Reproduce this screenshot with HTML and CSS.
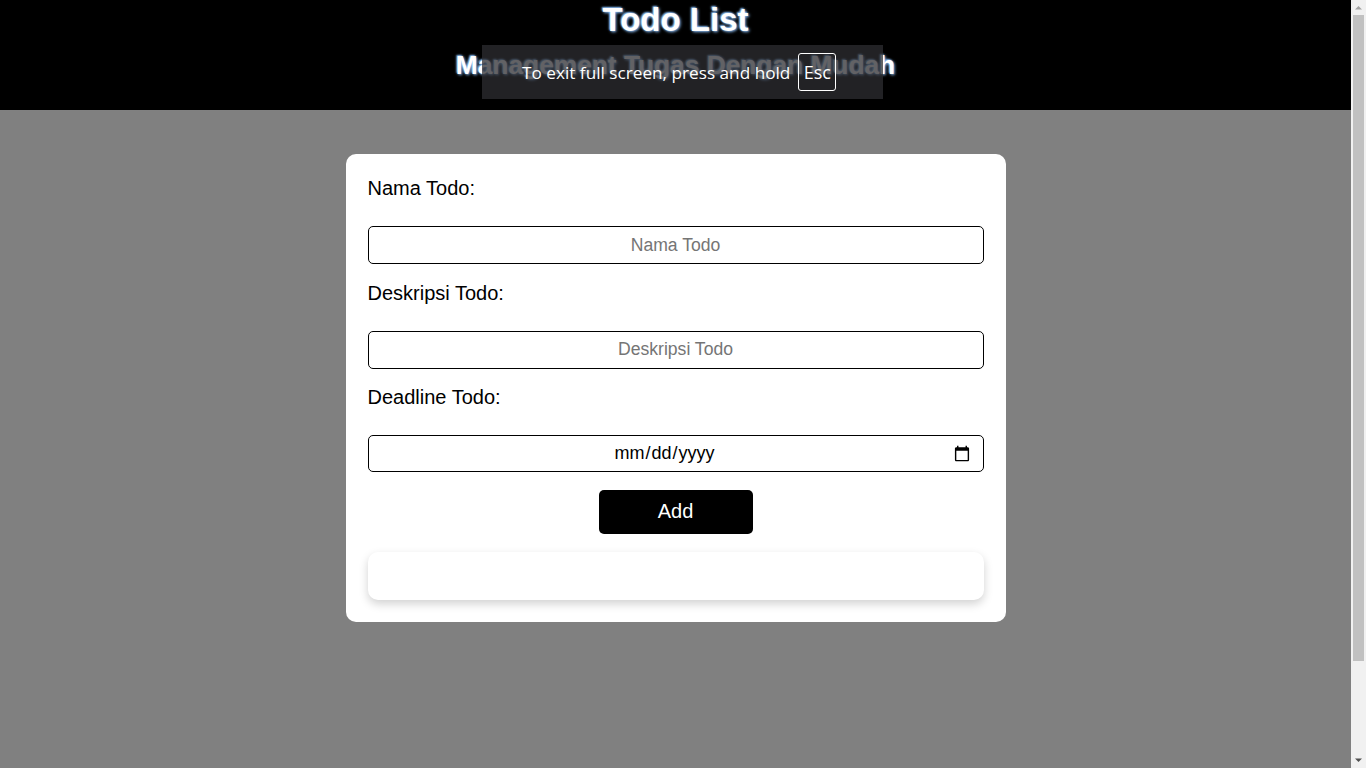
FILE: index.html
```html
<!DOCTYPE html>
<html lang="id">
<head>
<meta charset="utf-8">
<title>Todo List</title>
<link rel="stylesheet" href="styles.css">
</head>
<body>
<header class="site-header">
  <h1 class="title">Todo List</h1>
  <p class="subtitle">Management Tugas Dengan Mudah</p>
</header>
<main class="main">
  <section class="card">
    <form class="todo-form">
      <div class="field">
        <label class="field-label" for="nama">Nama Todo:</label>
        <input class="field-input" id="nama" type="text" placeholder="Nama Todo">
      </div>
      <div class="field">
        <label class="field-label" for="desk">Deskripsi Todo:</label>
        <input class="field-input" id="desk" type="text" placeholder="Deskripsi Todo">
      </div>
      <div class="field">
        <label class="field-label" for="deadline">Deadline Todo:</label>
        <input class="field-input date-input" id="deadline" type="date">
      </div>
      <button class="add-btn" type="button">Add</button>
      <div class="todo-list"></div>
    </form>
  </section>
</main>
<div class="fs-toast">
  <span class="fs-text">To exit full screen, press and hold</span>
  <span class="fs-key">Esc</span>
</div>
<div class="scrollbar">
  <svg class="sb-arrow sb-up" width="15" height="15" viewBox="0 0 15 15"><path d="M4 9.5 L7.5 6 L11 9.5 Z" fill="#a3a3a3"/></svg>
  <div class="sb-track"><div class="sb-thumb"></div></div>
  <svg class="sb-arrow sb-down" width="15" height="15" viewBox="0 0 15 15"><path d="M4 5.5 L7.5 9 L11 5.5 Z" fill="#505050"/></svg>
</div>
</body>
</html>
```
FILE: styles.css
```css
html, body {
  margin: 0;
  padding: 0;
}
body {
  font-family: "Liberation Sans", Arial, sans-serif;
  background: #808080;
  margin-right: 15px;
}
.site-header {
  height: 110px;
  box-sizing: border-box;
  padding-top: 1px;
  background: #000;
  text-align: center;
  color: #fff;
}
.title {
  margin: 0;
  font-size: 33px;
  line-height: 37px;
  font-weight: bold;
  text-shadow: 1px 1px 3px #8fc4ff, -1px -1px 2px #8fc4ff;
}
.subtitle {
  margin: 12px 0 0;
  font-size: 26.3px;
  line-height: 30px;
  font-weight: bold;
  text-shadow: 1px 1px 3px #8fc4ff, -1px -1px 2px #8fc4ff;
}
.main {
  min-height: 100vh;
  padding-top: 44px;
  box-sizing: border-box;
}
.card {
  width: 660px;
  margin: 0 auto;
  background: #fff;
  border-radius: 10px;
  padding: 23px 22px 22px;
  box-sizing: border-box;
}
.todo-form {
  display: flex;
  flex-direction: column;
  gap: 17.5px;
}
.field {
  display: flex;
  flex-direction: column;
}
.field-label {
  font-size: 20px;
  line-height: 22px;
  color: #000;
  margin-bottom: 27px;
}
.field-input {
  height: 38px;
  box-sizing: border-box;
  border: 1.5px solid #000;
  border-radius: 5px;
  padding: 0 10px;
  font-family: "Liberation Sans", Arial, sans-serif;
  font-size: 17.6px;
  text-align: center;
  color: #000;
  background: #fff;
}
.field-input::placeholder {
  color: #757575;
}
.date-input {
  height: 37px;
  font-size: 18px;
}
.add-btn {
  align-self: center;
  width: 154px;
  height: 44px;
  border: none;
  border-radius: 5px;
  background: #000;
  color: #fff;
  font-family: "Liberation Sans", Arial, sans-serif;
  font-size: 20px;
}
.todo-list {
  height: 48px;
  margin-top: 1px;
  border-radius: 10px;
  background: #fff;
  box-shadow: 0 4px 10px rgba(0, 0, 0, 0.18);
}
.fs-toast {
  position: absolute;
  top: 45px;
  left: 482px;
  width: 401px;
  height: 54px;
  box-sizing: border-box;
  padding-left: 40px;
  display: flex;
  align-items: center;
  gap: 8px;
  background: rgba(45, 46, 50, 0.75);
  color: #fff;
  font-family: "Open Sans", "DejaVu Sans", sans-serif;
  font-size: 17.2px;
}
.fs-key {
  width: 38px;
  height: 38px;
  box-sizing: border-box;
  border: 1px solid #fff;
  border-radius: 3px;
  display: flex;
  align-items: center;
  justify-content: center;
  font-size: 18px;
}
.scrollbar {
  position: fixed;
  top: 0;
  right: 0;
  width: 15px;
  height: 100vh;
  background: #f1f1f1;
  display: flex;
  flex-direction: column;
}
.sb-arrow {
  display: block;
  flex: none;
}
.sb-track {
  flex: 1;
  position: relative;
}
.sb-thumb {
  margin: 0 2px;
  height: 646px;
  background: #c1c1c1;
}
```
